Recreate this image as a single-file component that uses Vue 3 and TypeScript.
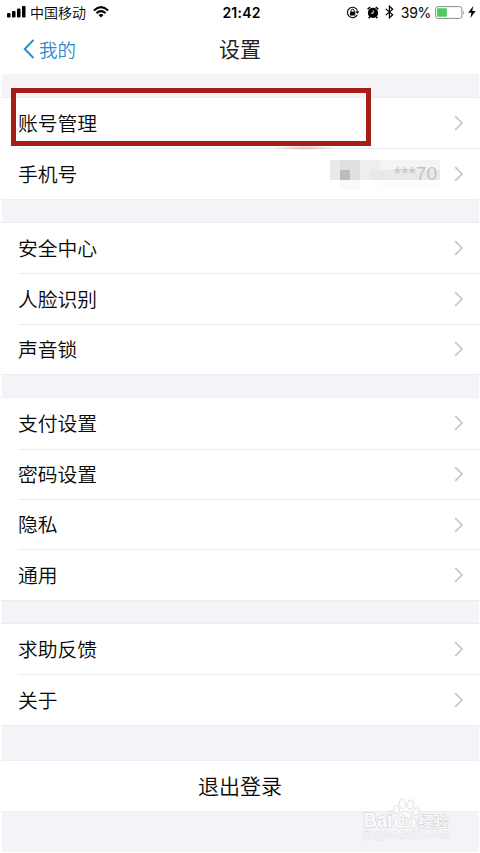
<script setup lang="ts">
interface Row {
  label: string
  masked?: boolean
}

const groups: Row[][] = [
  [{ label: '账号管理' }, { label: '手机号', masked: true }],
  [{ label: '安全中心' }, { label: '人脸识别' }, { label: '声音锁' }],
  [{ label: '支付设置' }, { label: '密码设置' }, { label: '隐私' }, { label: '通用' }],
  [{ label: '求助反馈' }, { label: '关于' }],
]
</script>

<template>
  <main class="screen">
    <div class="status">
      <div class="carrier">
        <svg class="signal" width="19" height="12" viewBox="0 0 19 12">
          <rect x="0" y="7" width="3.5" height="4.6" rx="1" />
          <rect x="5" y="5" width="3.5" height="6.6" rx="1" />
          <rect x="10" y="2.5" width="3.5" height="9.1" rx="1" />
          <rect x="15" y="0" width="3.5" height="11.6" rx="1" />
        </svg>
        <span class="operator">中国移动</span>
        <svg class="wifi" width="16" height="12" viewBox="0 0 16 12">
          <path d="M0.9 4.5Q8 -2.1 15.1 4.5M3.5 7.1Q8 3.1 12.5 7.1" fill="none" stroke="#000" stroke-width="2.1" />
          <path d="M5.5 8.9Q8 6.9 10.5 8.9L8 11.6Z" />
        </svg>
      </div>
      <span class="time">21:42</span>
      <div class="indicators">
        <svg class="lock" width="14" height="13" viewBox="0 0 14 13">
          <path d="M11.3 8.8A5.2 5.2 0 1 1 11.5 4.6" fill="none" stroke="#111" stroke-width="1.2" />
          <path d="M9.4 5.3H13.3L11.4 8Z" />
          <rect x="4" y="5.8" width="5.2" height="3.8" rx=".4" />
          <path d="M5.1 6V4.7a1.5 1.5 0 0 1 3 0V6" fill="none" stroke="#111" />
        </svg>
        <svg class="alarm" width="12" height="13" viewBox="0 0 12 13">
          <circle cx="6" cy="6.9" r="5.1" />
          <path d="M.6 3.2L3.2 1M8.8 1L11.4 3.2M2.9 10.7L1.7 12.2M9.1 10.7L10.3 12.2" stroke="#000" stroke-width="1.5" />
          <path d="M6.2 4.3V7.2H4" fill="none" stroke="#fff" stroke-width=".9" />
        </svg>
        <svg class="bluetooth" width="9" height="14" viewBox="0 0 9 14">
          <path d="M.8 3.9L7.7 9.7L4.4 12.8V1.2L7.7 4.3L.8 10.1" fill="none" stroke="#000" stroke-width="1.2" />
        </svg>
        <span class="percent">39%</span>
        <svg class="battery" width="30" height="13" viewBox="0 0 30 13">
          <rect x=".6" y=".6" width="26.3" height="11.8" rx="2.4" fill="#fff" stroke="#8d8d8d" />
          <rect x="2.1" y="2.2" width="9.8" height="8.6" rx=".8" fill="#4ccb62" />
          <path d="M28.2 4.5Q30 6.5 28.2 8.5Z" fill="#8d8d8d" />
        </svg>
        <svg class="bolt" width="8" height="12" viewBox="0 0 8 12">
          <path d="M5.2 0L.3 6.8H3.5L2.4 12L7.6 4.9H4.3Z" />
        </svg>
      </div>
    </div>

    <header class="nav">
      <div class="back">
        <svg width="12" height="20" viewBox="0 0 12 20">
          <path d="M10.5 1L1.7 10L10.5 19" fill="none" stroke="#2a8ccb" stroke-width="1.9" />
        </svg>
        <span>我的</span>
      </div>
      <h1>设置</h1>
    </header>

    <div class="content">
      <section v-for="(group, i) in groups" :key="i" class="group">
        <div v-for="row in group" :key="row.label" class="row">
          <span class="label">{{ row.label }}</span>
          <span v-if="row.masked" class="masked">
            <svg class="mosaic" width="110" height="30" viewBox="0 0 110 30">
              <rect width="110" height="20" fill="#f4f4f4" />
              <rect width="10" height="20" fill="#e9e9e9" />
              <rect x="10" width="10" height="10" fill="#e0e0e0" />
              <rect x="10" y="10" width="10" height="10" fill="#bcbcbc" />
              <rect x="20" width="10" height="20" fill="#e0e0e0" />
              <rect x="30" width="20" height="20" fill="#eee" />
              <rect x="40" y="10" width="70" height="10" fill="#e9e9e9" />
              <rect x="10" y="20" width="20" height="10" fill="#f9f9f9" />
              <rect x="50" y="20" width="60" height="8" fill="#fcfcfc" />
            </svg>
            <span class="digits">***70</span>
          </span>
          <svg class="chevron" width="10" height="16" viewBox="0 0 10 16">
            <path d="M1.2 1.2L8 8L1.2 14.8" fill="none" stroke="#c5c5ca" stroke-width="1.7" />
          </svg>
        </div>
      </section>
      <button class="logout" type="button">退出登录</button>
    </div>

    <div class="highlight"></div>
    <div class="smudge"></div>
    <svg class="watermark" width="96" height="48" viewBox="0 0 96 48">
      <g fill="#fcfcfc" stroke="#dcdcdc" stroke-width=".8">
        <ellipse cx="38.5" cy="16.5" rx="3" ry="4.1" transform="rotate(-15 38.5 16.5)" />
        <ellipse cx="44.5" cy="10.8" rx="3.2" ry="4.8" />
        <ellipse cx="52.5" cy="11.5" rx="3.2" ry="4.8" transform="rotate(15 52.5 11.5)" />
        <ellipse cx="57.8" cy="18.5" rx="3" ry="4" transform="rotate(20 57.8 18.5)" />
        <path d="M47.5 18.5C51 18.5 52.5 22.5 55.5 25C60.5 29.2 58.5 35 53 35C49.5 34.5 46 34.5 42.5 35C36 35.2 33.8 29.5 38.5 25.3C42 22.5 43.2 18.5 47.5 18.5Z" />
      </g>
      <g fill="#fafafc" stroke="#dadadc" stroke-width="1.6" paint-order="stroke" stroke-linejoin="round">
        <text x="5.5" y="34" class="brand" textLength="29" lengthAdjust="spacingAndGlyphs">Bai</text>
        <text x="40" y="32" class="du" textLength="14" lengthAdjust="spacingAndGlyphs">du</text>
        <text x="60" y="33.5" class="exp" textLength="30" lengthAdjust="spacingAndGlyphs">经验</text>
        <text x="6" y="45" class="url" textLength="86" lengthAdjust="spacingAndGlyphs">jingyan.baidu.com</text>
      </g>
    </svg>
  </main>
</template>

<style>
body {
  background: #fff;
}
</style>

<style scoped>
.screen {
  position: relative;
  box-sizing: border-box;
  width: 480px;
  height: 853px;
  overflow: hidden;
  background: #fff;
  color: #080808;
  font-family: "Noto Sans CJK SC", sans-serif;
}

.screen svg {
  display: block;
  flex: none;
}

.status {
  display: grid;
  grid-template-columns: 1fr auto 1fr;
  align-items: center;
  height: 24px;
  padding: 0 5px 0 7px;
  color: #000;
}

.carrier,
.indicators {
  display: flex;
  align-items: center;
}

.indicators {
  justify-content: flex-end;
}

.operator {
  margin: 0 7px 0 4px;
  font-size: 14px;
  font-weight: 350;
  line-height: 20px;
}

.time {
  font: 600 14px/20px Inter, sans-serif;
  letter-spacing: 0.2px;
  padding: 1px 0 0 1px;
}

.percent {
  margin: 0 4px 0 7px;
  font: 14px/20px Inter, sans-serif;
  letter-spacing: -0.3px;
  padding-top: 1px;
}

.alarm {
  margin: 0 6px 0 7px;
}

.bolt {
  margin-left: 3px;
  margin-right: -1px;
}

.nav {
  display: grid;
  grid-template-columns: 1fr auto 1fr;
  align-items: center;
  height: 50px;
}

.back {
  display: flex;
  align-items: center;
  gap: 4px;
  padding-left: 23px;
  color: #2a8ccb;
  font-size: 18.5px;
  font-weight: 350;
  line-height: 28px;
}

.back span {
  padding-bottom: 1px;
}

h1 {
  margin: 0;
  padding-bottom: 2px;
  font-size: 21px;
  font-weight: 400;
  line-height: 28px;
  color: #222;
}

.content {
  height: 778px;
  box-sizing: border-box;
  margin: 0 1px 0 2px;
  padding-top: 24px;
  background: #f3f3f8;
}

.group {
  margin: 0 -1px 23.9px -2px;
  background: #fff;
  box-shadow: 0 0 0 0.5px #e8e8ec;
}

.row {
  display: flex;
  align-items: center;
  height: 50.46px;
  box-sizing: border-box;
  margin-left: 18px;
  padding-right: 16px;
}

.row + .row {
  border-top: 1px solid #ebebee;
}

.label {
  flex: 1;
  padding-bottom: 0.5px;
  font-size: 19.8px;
  font-weight: 350;
  line-height: 30px;
}

.masked {
  position: relative;
  width: 110px;
  height: 28px;
  margin-right: 14px;
}

.digits {
  position: absolute;
  right: 3px;
  top: 2px;
  color: #c3c3c7;
  font: 19px/24px "Liberation Sans", sans-serif;
}

.mosaic {
  position: absolute;
  top: 0;
  left: 0;
}

.logout {
  display: block;
  width: 480px;
  height: 50.5px;
  margin: 36px 0 0 -2px;
  padding: 0 0 1px;
  border: 0;
  background: #fff;
  color: #080808;
  box-shadow: 0 0 0 0.5px #e8e8ec;
  font: 350 21px/30px "Noto Sans CJK SC", sans-serif;
}

.highlight {
  position: absolute;
  top: 88px;
  left: 11px;
  width: 360px;
  height: 58px;
  box-sizing: border-box;
  border: 5px solid #a71e16;
}

.smudge {
  position: absolute;
  top: 146px;
  left: 274px;
  width: 62px;
  height: 4px;
  border-radius: 50%;
  background: radial-gradient(ellipse, rgba(225, 120, 120, 0.5), rgba(240, 160, 160, 0) 75%);
}

.watermark {
  position: absolute;
  top: 793px;
  left: 358px;
}

.brand {
  font: 700 20px "Liberation Sans", sans-serif;
}

.du {
  font: 700 13px "Liberation Sans", sans-serif;
}

.exp {
  font: 500 15px "Noto Sans CJK SC", sans-serif;
}

.url {
  font: 10px "Liberation Sans", sans-serif;
  stroke-width: 1;
  stroke: #e2e2e4;
}
</style>
